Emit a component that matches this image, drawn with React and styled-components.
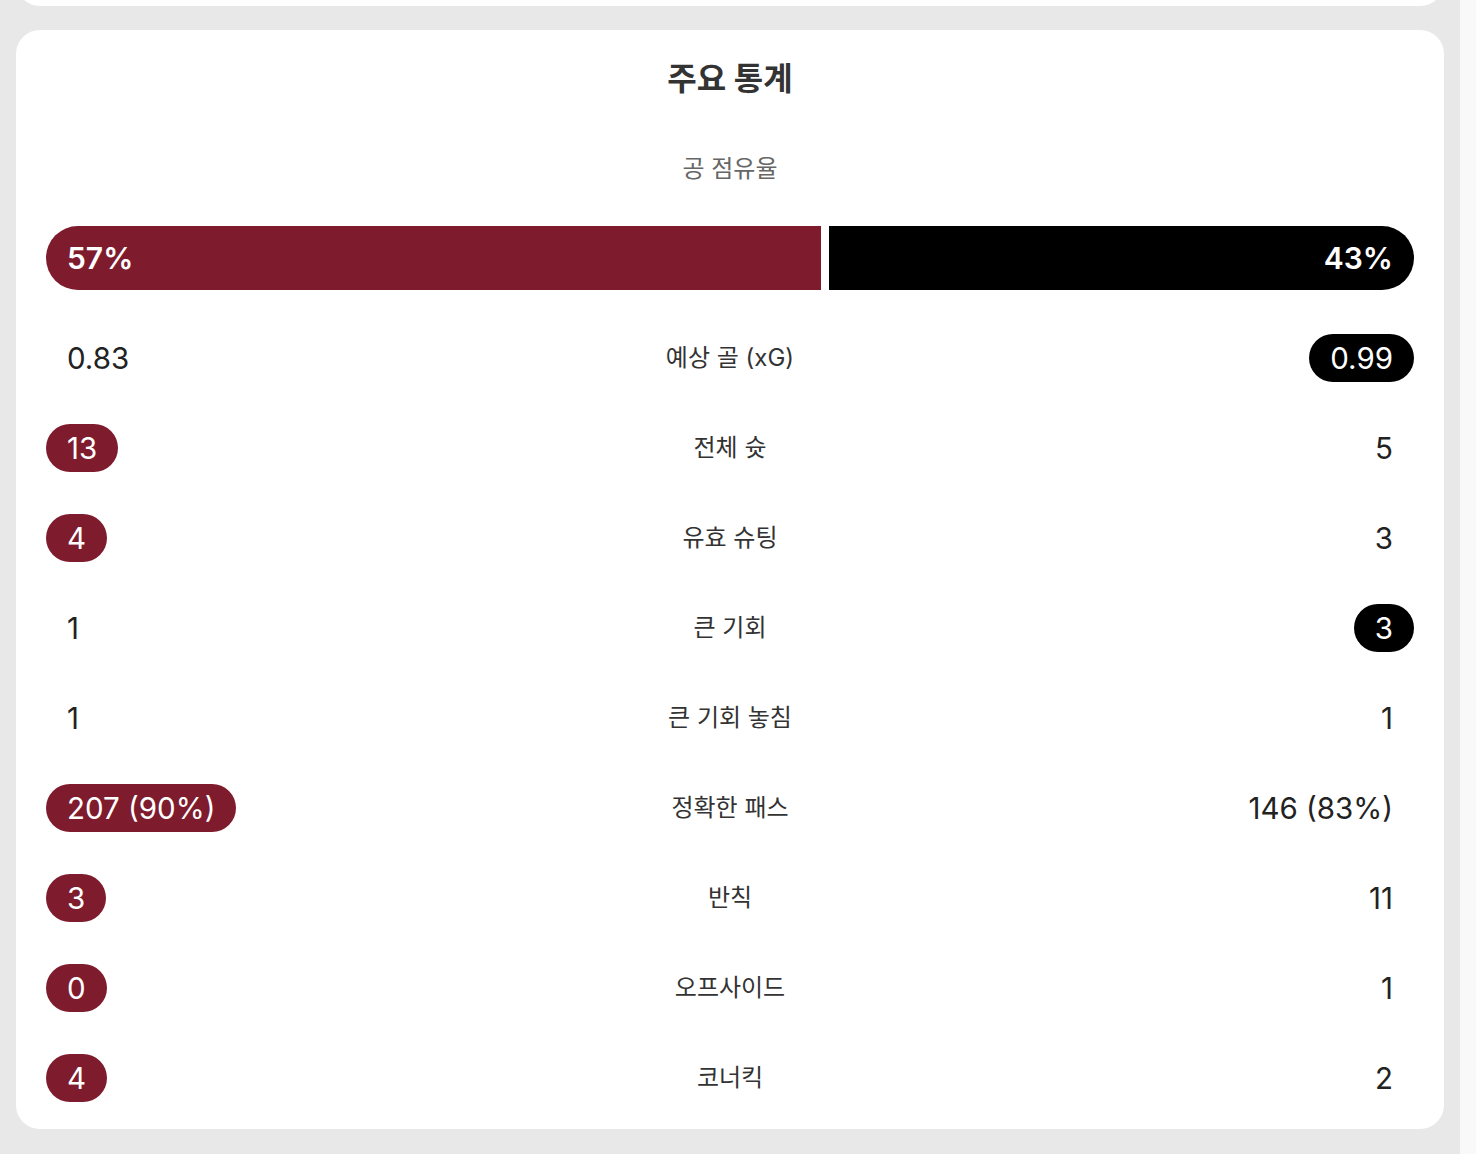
import React from 'react';
import styled, { createGlobalStyle } from 'styled-components';

const HOME = '#7e1b2c';
const AWAY = '#000000';

const GlobalStyle = createGlobalStyle`
  *, *::before, *::after {
    box-sizing: border-box;
  }
  html, body {
    margin: 0;
    padding: 0;
    background: #e8e8e8;
    font-family: Inter, "Noto Sans CJK KR", sans-serif;
    -webkit-font-smoothing: antialiased;
  }
`;

// Layout
const Page = styled.div`
  display: flex;
  min-height: 1154px;
`;

const Column = styled.div`
  flex: 1;
  display: flex;
  flex-direction: column;
  gap: 24px;
  padding: 0 16px;
`;

const Scrollbar = styled.div`
  width: 16px;
  background: #f9f9f9;
`;

const PrevCardClip = styled.div`
  height: 6px;
  overflow: hidden;
  display: flex;
  align-items: flex-end;
`;

const PrevCard = styled.div`
  flex: 1;
  height: 48px;
  background: #fff;
  border-radius: 24px;
`;

const Card = styled.section`
  background: #fff;
  border-radius: 24px;
  padding: 28px 30px 27px;
  display: flex;
  flex-direction: column;
`;

const Title = styled.h2`
  margin: 0;
  text-align: center;
  font-size: 32px;
  line-height: 40px;
  font-weight: 700;
  color: #333;
  padding-top: 1px;
`;

const SubTitle = styled.div`
  margin-top: 54px;
  text-align: center;
  font-size: 24px;
  line-height: 32px;
  color: #666;
`;

// Possession bar
const Bar = styled.div`
  margin-top: 41px;
  display: flex;
  gap: 8px;
  height: 64px;
`;

const BarSide = styled.div`
  flex: 0 0 calc((100% - 8px) * ${(p) => p.$share / 100});
  display: flex;
  align-items: center;
  justify-content: ${(p) => (p.$side === 'home' ? 'flex-start' : 'flex-end')};
  padding: 0 21px;
  background: ${(p) => (p.$side === 'home' ? HOME : AWAY)};
  border-radius: ${(p) => (p.$side === 'home' ? '32px 0 0 32px' : '0 32px 32px 0')};
  color: #fff;
  font-size: 30px;
  font-weight: 600;
`;

// Stat rows
const Rows = styled.div`
  margin-top: 44px;
  display: flex;
  flex-direction: column;
  gap: 42px;
`;

const Row = styled.div`
  display: grid;
  grid-template-columns: 1fr auto 1fr;
  align-items: center;
  height: 48px;
`;

const Label = styled.div`
  text-align: center;
  font-size: 24px;
  line-height: 32px;
  padding-bottom: 1px;
  color: #333;
`;

const Cell = styled.div`
  display: flex;
  justify-content: ${(p) => (p.$side === 'home' ? 'flex-start' : 'flex-end')};
`;

const Value = styled.span`
  display: inline-flex;
  align-items: center;
  height: 48px;
  padding: 0 21px;
  border-radius: 24px;
  font-size: 29.5px;
  font-weight: 400;
  color: ${(p) => (p.$win ? '#fff' : '#222')};
  background: ${(p) => (p.$win ? (p.$side === 'home' ? HOME : AWAY) : 'transparent')};
`;

const stats = [
  { label: '예상 골 (xG)', home: '0.83', away: '0.99', win: 'away' },
  { label: '전체 슛', home: '13', away: '5', win: 'home' },
  { label: '유효 슈팅', home: '4', away: '3', win: 'home' },
  { label: '큰 기회', home: '1', away: '3', win: 'away' },
  { label: '큰 기회 놓침', home: '1', away: '1' },
  { label: '정확한 패스', home: '207 (90%)', away: '146 (83%)', win: 'home' },
  { label: '반칙', home: '3', away: '11', win: 'home' },
  { label: '오프사이드', home: '0', away: '1', win: 'home' },
  { label: '코너킥', home: '4', away: '2', win: 'home' },
];

const StatRow = ({ stat }) => (
  <Row>
    <Cell $side="home">
      <Value $side="home" $win={stat.win === 'home'}>{stat.home}</Value>
    </Cell>
    <Label>{stat.label}</Label>
    <Cell $side="away">
      <Value $side="away" $win={stat.win === 'away'}>{stat.away}</Value>
    </Cell>
  </Row>
);

const App = () => {
  const possession = { home: 57, away: 43 };
  return (
    <>
      <GlobalStyle />
      <Page>
        <Column>
          <PrevCardClip>
            <PrevCard />
          </PrevCardClip>
          <Card>
            <Title>주요 통계</Title>
            <SubTitle>공 점유율</SubTitle>
            <Bar>
              <BarSide $side="home" $share={possession.home}>{possession.home}%</BarSide>
              <BarSide $side="away" $share={possession.away}>{possession.away}%</BarSide>
            </Bar>
            <Rows>
              {stats.map((s) => (
                <StatRow key={s.label} stat={s} />
              ))}
            </Rows>
          </Card>
        </Column>
        <Scrollbar />
      </Page>
    </>
  );
};

export default App;
